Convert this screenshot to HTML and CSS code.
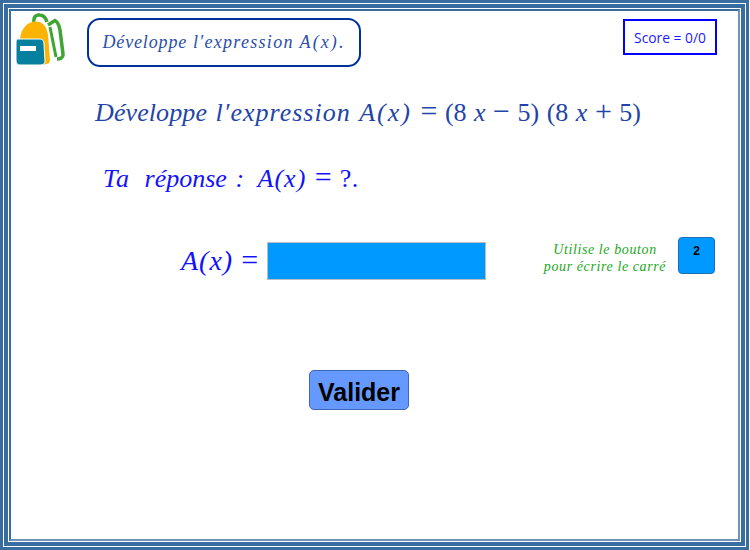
FILE: index.html
```html
<!DOCTYPE html>
<html lang="fr">
<head>
<meta charset="utf-8">
<title>Développe l'expression</title>
<link rel="stylesheet" href="styles.css">
</head>
<body>
<div class="frame f1"><div class="frame f2"><div class="frame f3">
<main class="board">
  <header class="top">
    <svg class="bag" width="50" height="56" viewBox="0 0 50 56" aria-hidden="true">
      <path d="M19 9C18 3 22 1.500 25 2C29 2.500 31 5 32 9" fill="none" stroke="#3fa535" stroke-width="3.500"/>
      <path d="M33 12L40 7.500C43 9 44 12 45 17L48 41C48.500 45 45 46 42 46" fill="none" stroke="#3fa535" stroke-width="3.500"/>
      <path d="M35 14L41 44" fill="none" stroke="#3fa535" stroke-width="3"/>
      <path d="M5 26C6 16 12 9 20 8.500C28 8 32 14 33 22L35 47C35 50 33 51 31 51L27 52L27 26Z" fill="#fdb400"/>
      <path d="M3 26H25C28 26 29 28 29 31L30 48C30 51 28 52 25 52H5C2 52 1 50 1 47V29C1 27 2 26 3 26Z" fill="#07809f" stroke="#fff" stroke-width="1"/>
      <rect x="5" y="33" width="16" height="5" fill="#fff"/>
    </svg>
    <div class="title"><span class="math"><span class="tight">Développe</span> l′expression <span class="wide">A(x).</span></span></div>
    <div class="score">Score = 0/0</div>
  </header>
  <p class="statement math"><span class="tight">Développe</span> l′expression <span class="wide">A(x)</span> <span class="up"><span class="op">=</span> (8 <i>x</i> <span class="op">−</span> 5) (8 <i>x</i> <span class="op">+</span> 5)</span></p>
  <p class="answer math"><span class="ta">Ta</span> <span class="rep">réponse</span> : <span class="ax">A(x)</span> <span class="up"><span class="op">=</span> ?.</span></p>
  <section class="entry">
    <span class="label math">A(x) <span class="up op">=</span></span>
    <div class="field"></div>
    <p class="hint math">Utilise le bouton<br>pour écrire le carré</p>
    <button class="square" type="button">2</button>
  </section>
  <button class="validate" type="button">Valider</button>
</main>
</div></div></div>
</body>
</html>
```

FILE: styles.css
```css
html, body { margin: 0; padding: 0; background: #fff; }
body { width: 750px; height: 550px; overflow: hidden; }
.frame { box-sizing: border-box; height: 100%; }
.f1 { width: 749px; height: 550px; border: 3px solid #3a6d9f; padding: 1px; }
.f2 { border: 4px solid #3a6d9f; padding: 1px; }
.f3 { border: 2px solid #3a6d9f; border-right-color: #6f93b8; border-bottom-color: #6f93b8; }
.board { height: 100%; box-sizing: border-box; padding: 2px 0 0 0; }
.math { font-family: "Liberation Serif", serif; font-style: italic; }
.up { font-style: normal; }
.top { display: flex; align-items: flex-start; }
.bag { margin: 0 0 0 4px; flex: none; }
.title {
  box-sizing: border-box; width: 274px; height: 49px; margin: 5px 0 0 22px;
  border: 2px solid #003399; border-radius: 13px;
  display: flex; align-items: center; justify-content: center;
  color: #2a4ea8; font-size: 18px; letter-spacing: 1.3px;
}
.title .tight { letter-spacing: .85px; }
.title .wide { letter-spacing: 2.100px; }
.score {
  box-sizing: border-box; width: 94px; height: 36px; margin: 6px 21px 0 auto;
  border: 2px solid #0000ff; color: #1a1aff;
  display: flex; align-items: center; justify-content: center;
  font: 13.800px "Open Sans", sans-serif;
}
.statement { margin: 29px 0 0 84px; font-size: 26px; line-height: 30px; letter-spacing: 1px; word-spacing: 1px; color: #1f45a8; white-space: nowrap; }
.statement .tight { letter-spacing: .1px; }
.statement .wide { letter-spacing: 2px; }
.statement .up { letter-spacing: 0; }
.op { font-size: 30px; line-height: 1px; }
.answer { margin: 36px 0 0 92px; font-size: 26px; line-height: 30px; letter-spacing: 1px; word-spacing: 1px; color: #1212ff; white-space: nowrap; }
.ta { margin-right: 6px; }
.rep { letter-spacing: 0; }
.ax { margin-left: 4px; }
.answer .up { letter-spacing: .3px; }
.entry { display: flex; align-items: flex-start; margin: 43px 0 0 170px; height: 43px; }
.label { margin-top: 5px; font-size: 28px; line-height: 38px; letter-spacing: 1px; color: #1212ff; width: 86px; flex: none; white-space: nowrap; }
.field { box-sizing: border-box; width: 219px; height: 38px; margin-top: 5px; background: #0099ff; border: 1px solid #bdbdbd; flex: none; }
.hint {
  width: 130px; margin: 4px 0 0 54px; font-size: 14px; line-height: 17px; letter-spacing: .6px; text-align: center; color: #22a822; flex: none; white-space: nowrap;
}
.square {
  box-sizing: border-box; width: 37px; height: 37px; margin: 0 0 0 8px; padding: 0 0 9px; border: 1px solid #1a6fb5; border-radius: 4px;
  background: #0099ff; color: #000; font: bold 12px "Liberation Sans", sans-serif;
}
.validate {
  display: block; box-sizing: border-box; width: 100px; height: 40px; margin: 90px 0 0 298px; padding: 4px 0 0;
  border: 1px solid #3f67b8; border-radius: 5px; background: #6699ff; color: #000;
  font: bold 25px "Liberation Sans", sans-serif;
}
```
